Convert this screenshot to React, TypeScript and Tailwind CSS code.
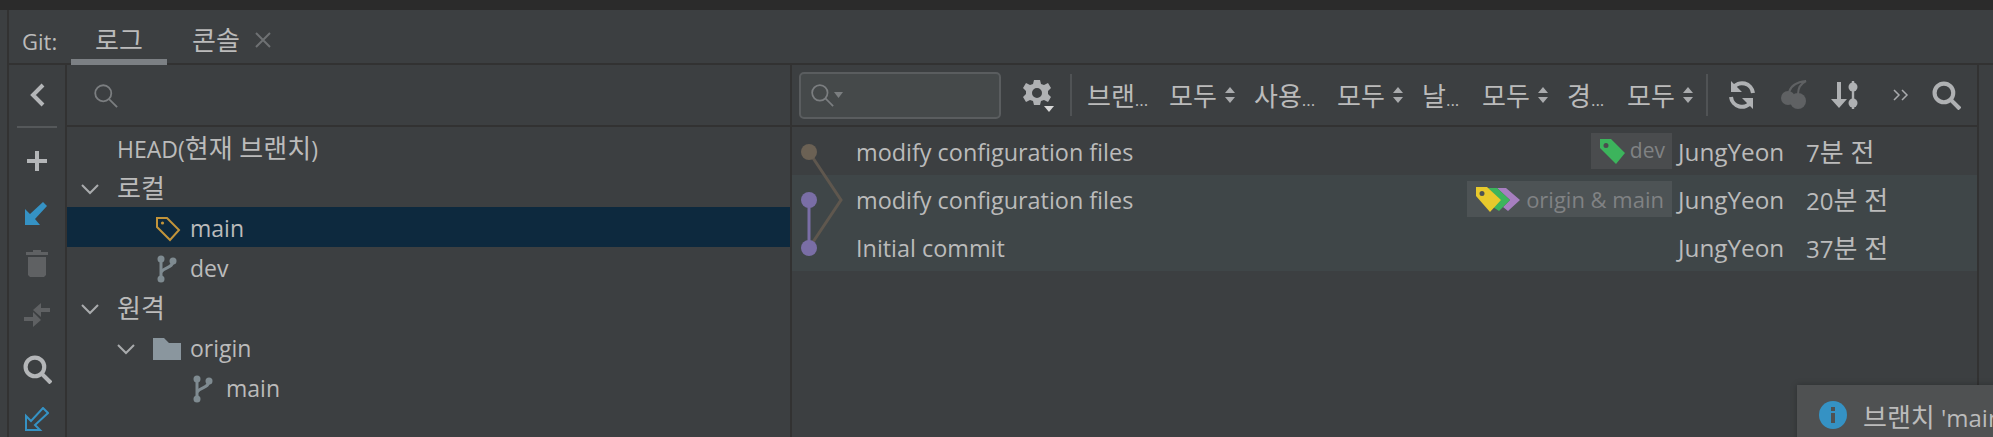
const font = "[font-family:'Open_Sans','Noto_Sans_CJK_KR',sans-serif]";

function Chevron() {
  return (
    <svg width="18" height="12" viewBox="0 0 18 12" fill="none" stroke="#a9abad" strokeWidth="2">
      <path d="M1 2l8 8 8-8" />
    </svg>
  );
}

function BranchIcon() {
  return (
    <svg width="20" height="28" viewBox="0 0 20 28" fill="#7f8b91">
      <circle cx="4" cy="4" r="3.5" />
      <circle cx="4" cy="24" r="3.5" />
      <circle cx="16" cy="6" r="3.5" />
      <path d="M4 4v20" stroke="#7f8b91" strokeWidth="3" />
      <path d="M16 6c0 7-8 6-12 11" stroke="#7f8b91" strokeWidth="3" fill="none" />
    </svg>
  );
}

function TagOutline() {
  return (
    <svg width="26" height="26" viewBox="0 0 26 26" fill="none" stroke="#c2943a" strokeWidth="2">
      <path d="M2 2h10l12 12-9 10L2 11z" />
      <circle cx="7.5" cy="7" r="1.6" fill="#c2943a" stroke="none" />
    </svg>
  );
}

function TreeRow({ pad, children, selected }: { pad: number; children: React.ReactNode; selected?: boolean }) {
  return (
    <div className={`flex h-10 items-center pt-[3px] ${selected ? "bg-[#0d293e]" : ""}`} style={{ paddingLeft: pad }}>
      {children}
    </div>
  );
}

function Updown() {
  return (
    <svg width="12" height="18" viewBox="0 0 12 18" fill="#a9abad" className="ml-[6px]">
      <path d="M6 1l5 6H1zM6 17l5-6H1z" />
    </svg>
  );
}

function Filter({ label, w }: { label: string; w: number }) {
  return (
    <div className="flex items-center">
      <span className="pt-[3px] text-[26px] whitespace-nowrap" style={{ width: w }}>
        {label}
        <span className="text-[17px]">...</span>
      </span>
      <span className="w-[49px] pt-[3px] text-[26px] whitespace-nowrap">모두</span>
      <Updown />
    </div>
  );
}

function SearchIcon({ color, size, sw }: { color: string; size: number; sw: number }) {
  return (
    <svg width={size} height={size} viewBox="0 0 28 28" fill="none" stroke={color} strokeWidth={sw}>
      <circle cx="11.5" cy="11.5" r="9" />
      <path d="M18 18l9 9" />
    </svg>
  );
}

function CommitRow({ text, time, unit, alt, pill }: { text: string; time: string; unit: string; alt?: boolean; pill?: React.ReactNode }) {
  return (
    <div className={`flex h-12 items-center ${alt ? "bg-[#3f4648]" : ""}`}>
      <span className="ml-[64px] flex-1 pt-[3px] text-[23.4px] whitespace-nowrap">{text}</span>
      {pill}
      <span className="ml-[6px] w-[128px] pt-[3px] text-[24.3px] whitespace-nowrap">JungYeon</span>
      <span className="w-[171px] pt-[3px] text-[24px] whitespace-nowrap">
        {time}
        <span className="text-[26px]">{unit}</span>
      </span>
    </div>
  );
}

export default function App() {
  return (
    <div className={`relative flex h-[437px] w-[1993px] flex-col overflow-hidden bg-[#3c3f41] text-[#bbbbbb] ${font}`}>
      <div className="h-[10px] shrink-0 bg-[#2b2b2b]" />
      <div className="flex min-h-0 flex-1">
        <div className="w-[9px] shrink-0 border-r-2 border-[#323232]" />
        <div className="flex min-w-0 flex-1 flex-col">
          {/* tabs */}
          <div className="flex h-[55px] shrink-0 items-start border-b-2 border-[#323232]">
            <span className="ml-[13px] mt-[15px] w-[49px] text-[22px] leading-[32px]">Git:</span>
            <div className="h-[55px] w-[96px] border-b-[6px] border-[#7c8084] pl-[24px] pt-[14px] text-[26px] leading-[32px]">로그</div>
            <span className="ml-[25px] mt-[14px] text-[26px] leading-[32px]">콘솔</span>
            <svg width="16" height="16" viewBox="0 0 16 16" stroke="#6e7173" strokeWidth="2" className="ml-[15px] mt-[22px]">
              <path d="M1 1l14 14M15 1L1 15" />
            </svg>
          </div>
          <div className="flex min-h-0 flex-1">
            {/* left toolbar */}
            <div className="flex w-[58px] shrink-0 flex-col items-center border-r-2 border-[#323232]">
              <div className="flex h-[60px] items-center">
                <svg width="16" height="24" viewBox="0 0 16 24" fill="none" stroke="#b4b6b8" strokeWidth="4"><path d="M14 2L4 12l10 10" /></svg>
              </div>
              <div className="flex h-[4px] items-center"><div className="h-[2px] w-[40px] bg-[#55585a]" /></div>
              <div className="flex h-[64px] items-center">
                <svg width="20" height="20" viewBox="0 0 20 20" fill="#b4b6b8"><path d="M8 0h4v8h8v4h-8v8H8v-8H0V8h8z" /></svg>
              </div>
              <div className="flex h-[40px] items-center">
                <svg width="24" height="24" viewBox="0 0 24 24" fill="#3592c4"><path d="M0 24V8l5 5L18 1l4 4L10 18l5 6z" /></svg>
              </div>
              <div className="flex h-[60px] items-center">
                <svg width="22" height="27" viewBox="0 0 22 27" fill="#5f6163"><path d="M7 0h8v2h7v3H0V2h7zM2 7h18v18l-2 2H4l-2-2z" /></svg>
              </div>
              <div className="flex h-[44px] items-center">
                <svg width="30" height="30" viewBox="0 0 30 30" fill="#5f6163"><path d="M28 8v4H19v5l-8-7 8-7v5zM2 17h9v-5l8 8-8 7v-6H2z" /></svg>
              </div>
              <div className="flex h-[64px] items-center"><SearchIcon color="#b4b6b8" size={29} sw={4} /></div>
              <div className="flex h-[36px] items-center">
                <svg width="24" height="24" viewBox="0 0 24 24" fill="none" stroke="#3592c4" strokeWidth="2"><path d="M1 9v14h14l-5-5L23 6l-5-5L6 14z" /></svg>
              </div>
            </div>
            {/* branch tree */}
            <div className="flex w-[725px] shrink-0 flex-col border-r-2 border-[#323232]">
              <div className="flex h-[62px] shrink-0 items-center border-b-2 border-[#323232] pl-[26px]">
                <SearchIcon color="#7b7e80" size={25} sw={2} />
              </div>
              <TreeRow pad={50}>
                <span className="whitespace-nowrap text-[23px]">HEAD(<span className="text-[26px]">현재 브랜치</span>)</span>
              </TreeRow>
              <TreeRow pad={14}><Chevron /><span className="ml-[18px] text-[26px]">로컬</span></TreeRow>
              <TreeRow pad={88} selected><TagOutline /><span className="ml-[9px] text-[23px]">main</span></TreeRow>
              <TreeRow pad={90}><BranchIcon /><span className="ml-[13px] text-[23px]">dev</span></TreeRow>
              <TreeRow pad={14}><Chevron /><span className="ml-[18px] text-[26px]">원격</span></TreeRow>
              <TreeRow pad={50}>
                <Chevron />
                <svg width="28" height="22" viewBox="0 0 28 22" fill="#8a969e" className="ml-[18px]"><path d="M0 0h11l5 5h12v17H0z" /></svg>
                <span className="ml-[9px] text-[23px]">origin</span>
              </TreeRow>
              <TreeRow pad={126}><BranchIcon /><span className="ml-[13px] text-[23px]">main</span></TreeRow>
            </div>
            {/* commit log */}
            <div className="flex min-w-0 flex-1 flex-col border-r-2 border-[#323232]">
              <div className="flex h-[62px] shrink-0 items-center border-b-2 border-[#323232] pl-[7px]">
                <div className="flex h-[47px] w-[202px] items-center rounded-[5px] border-2 border-[#5a5d5f] bg-[#45494a] pl-[9px]">
                  <SearchIcon color="#7b7e80" size={24} sw={2} />
                  <svg width="9" height="6" viewBox="0 0 9 6" fill="#7b7e80"><path d="M0 0h9L4.5 6z" /></svg>
                </div>
                <svg width="32" height="34" viewBox="0 0 32 34" className="ml-[22px]">
                  <path fill="#afb1b3" fillRule="evenodd" d="M11 2h6l1 4 3 1 4-2 3 5-3 3v3l3 3-3 5-4-2-3 1-1 4h-6l-1-4-3-1-4 2-3-5 3-3v-3L0 10l3-5 4 2 3-1zm3 8a5 5 0 100 10 5 5 0 000-10z" />
                  <path fill="#d8d8d8" d="M21 28h10l-5 6z" />
                </svg>
                <div className="ml-[15px] h-[42px] w-[2px] bg-[#505355]" />
                <div className="ml-[15px]"><Filter label="브랜" w={82} /></div>
                <div className="ml-[18px]"><Filter label="사용" w={83} /></div>
                <div className="ml-[18px]"><Filter label="날" w={60} /></div>
                <div className="ml-[18px]"><Filter label="경" w={60} /></div>
                <div className="ml-[12px] h-[42px] w-[2px] bg-[#505355]" />
                <svg width="30" height="30" viewBox="0 0 30 30" fill="none" stroke="#afb1b3" strokeWidth="4" className="ml-[19px] -scale-x-100">
                  <path d="M4 13a11 11 0 0120-5M26 17a11 11 0 01-20 5" />
                  <path d="M26 1v11H15zM4 29V18h11z" fill="#afb1b3" stroke="none" />
                </svg>
                <svg width="26" height="30" viewBox="0 0 26 30" className="ml-[24px]" fill="#5f6163">
                  <circle cx="7" cy="18" r="7" />
                  <circle cx="17" cy="21" r="8" />
                  <path d="M8 12C10 5 16 2 25 1c-6 3-8 8-8 13" fill="none" stroke="#5f6163" strokeWidth="2" />
                </svg>
                <svg width="28" height="28" viewBox="0 0 28 28" fill="#afb1b3" className="ml-[24px]">
                  <path d="M6 1h4v17h6l-8 9-8-9h6z" />
                  <circle cx="22" cy="6" r="4.5" />
                  <circle cx="22" cy="22" r="4.5" />
                  <path d="M20.8 0h2.4v28h-2.4z" />
                </svg>
                <svg width="16" height="12" viewBox="0 0 16 12" fill="none" stroke="#a9abad" strokeWidth="1.5" className="ml-[34px]">
                  <path d="M1 1l5 5-5 5M9 1l5 5-5 5" />
                </svg>
                <div className="ml-[23px]"><SearchIcon color="#afb1b3" size={29} sw={4} /></div>
              </div>
              <div className="relative">
                <svg width="60" height="144" viewBox="0 0 60 144" fill="none" className="absolute left-0 top-0">
                  <path d="M17 25l32 48-32 48" stroke="#5f574e" strokeWidth="3" />
                  <path d="M17 73v48" stroke="#7a6ea6" strokeWidth="3" />
                  <circle cx="17" cy="25" r="8" fill="#6b6154" />
                  <circle cx="17" cy="73" r="8" fill="#7a6ea6" />
                  <circle cx="17" cy="121" r="8" fill="#7a6ea6" />
                </svg>
                <CommitRow
                  text="modify configuration files"
                  time="7"
                  unit="분 전"
                  pill={
                    <div className="flex h-[36px] items-center bg-[#4a4c4e] pl-[9px] pr-[7px] text-[#808284]">
                      <svg width="25" height="25" viewBox="0 0 25 25" fill="#3cb45c"><path fillRule="evenodd" d="M0 0h11l14 14-9 11L0 9zm6 4a2.5 2.5 0 100 5 2.5 2.5 0 000-5z" /></svg>
                      <span className="ml-[5px] text-[21px]">dev</span>
                    </div>
                  }
                />
                <CommitRow
                  text="modify configuration files"
                  time="20"
                  unit="분 전"
                  alt
                  pill={
                    <div className="flex h-[36px] items-center bg-[#4d5355] pl-[9px] pr-[8px] text-[#808284]">
                      <svg width="44" height="25" viewBox="0 0 44 25">
                        <path fill="#a77fc0" d="M21 1h9l14 12-12 11-5-4 7-7z" />
                        <path fill="#3cb45c" d="M12 1h9l13 12-11 11-6-4 7-7z" />
                        <path fill="#e8c92c" fillRule="evenodd" d="M0 0h11l14 13-11 12L0 9zm6 4a2.5 2.5 0 100 5 2.5 2.5 0 000-5z" />
                      </svg>
                      <span className="ml-[6px] text-[22px]">origin &amp; main</span>
                    </div>
                  }
                />
                <CommitRow text="Initial commit" time="37" unit="분 전" alt />
              </div>
            </div>
            <div className="w-[14px] shrink-0" />
          </div>
        </div>
      </div>
      {/* notification balloon */}
      <div className="absolute left-[1797px] top-[385px] flex h-[60px] w-[220px] items-center bg-[#4f5152] pl-[22px] shadow-[0_0_6px_rgba(0,0,0,0.25)]">
        <svg width="28" height="28" viewBox="0 0 28 28" className="shrink-0">
          <circle cx="14" cy="14" r="14" fill="#3592c4" />
          <path d="M12 6h4v4h-4zM12 12h4v10h-4z" fill="#4f5152" />
        </svg>
        <span className="ml-[16px] pt-[5px] whitespace-nowrap text-[24px]">
          <span className="text-[26px]">브랜치</span> 'main
        </span>
      </div>
    </div>
  );
}
